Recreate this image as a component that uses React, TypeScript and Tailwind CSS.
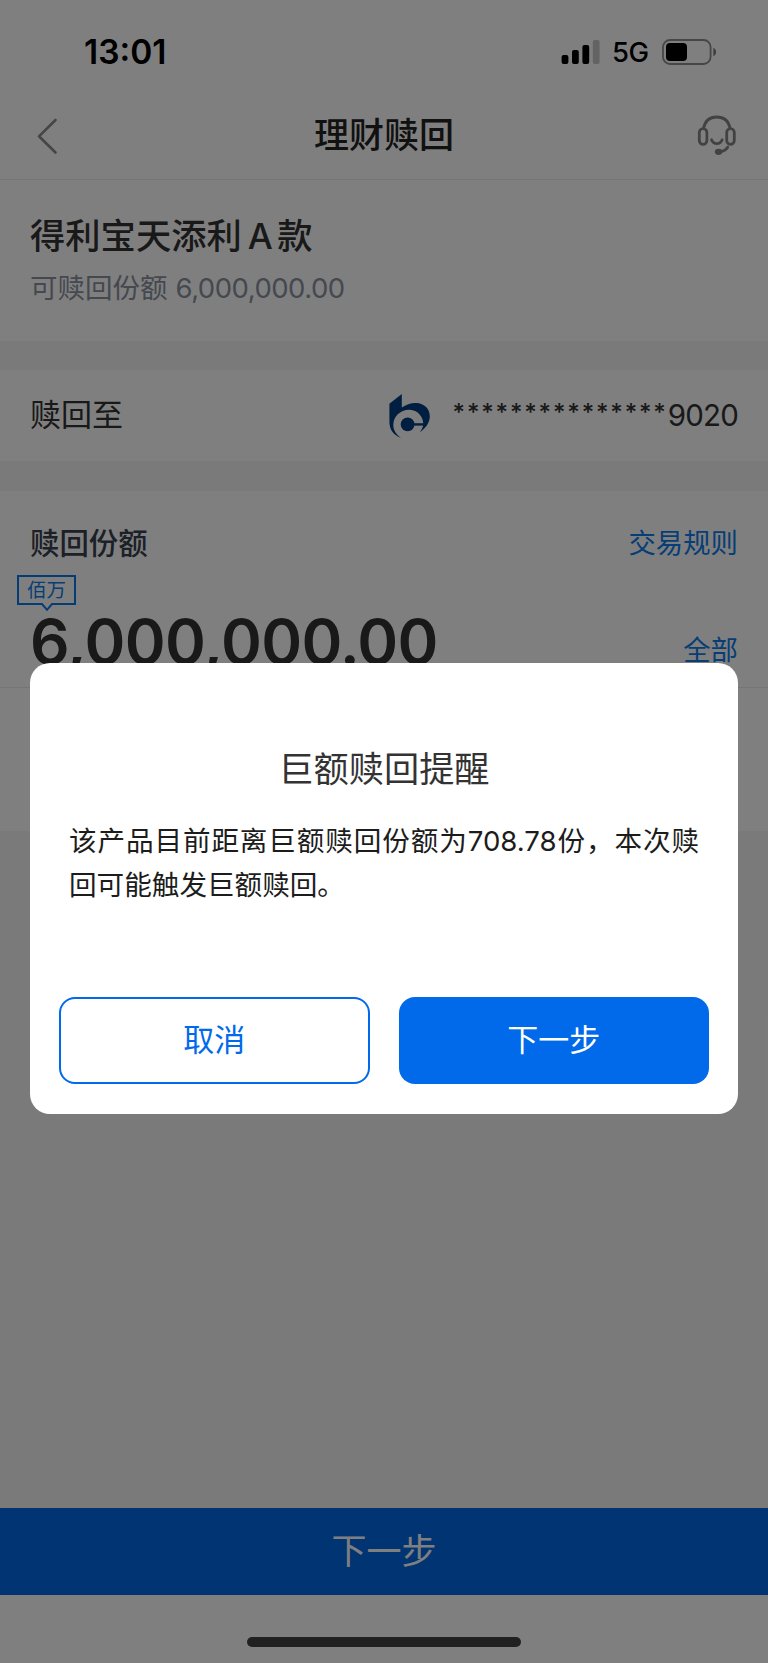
import type { ReactNode } from "react";

function StatusBar() {
  return (
    <div className="flex h-[103px] shrink-0 items-start justify-between pr-[51px] pl-[84px]">
      <span className="mt-[32px] text-[33.5px] leading-[40px] font-semibold text-black">13:01</span>
      <div className="mt-[36px] flex items-center">
        <svg width="39" height="30" viewBox="0 0 39 30" fill="#000">
          <rect x="0.6" y="18" width="6.8" height="9" rx="2" />
          <rect x="11" y="13" width="6.8" height="14" rx="2" />
          <rect x="21.4" y="8" width="6.8" height="19" rx="2" />
          <rect x="31.8" y="3" width="6.8" height="24" rx="2" fillOpacity="0.22" />
        </svg>
        <span className="mt-px ml-[12px] w-[38px] text-[27.5px] leading-[30px] font-medium tracking-[-0.5px] text-black">5G</span>
        <svg className="ml-[12px]" width="55" height="30" viewBox="0 0 55 30">
          <rect x="1" y="3" width="47.6" height="24" rx="7" fill="none" stroke="#000" strokeOpacity="0.45" strokeWidth="1.8" />
          <rect x="4" y="6" width="21" height="18" rx="4" fill="#000" />
          <path d="M51.3 11 C55 12 55 18 51.3 19 Z" fill="#000" fillOpacity="0.5" />
        </svg>
      </div>
    </div>
  );
}

function NavBar() {
  return (
    <header className="flex h-[77px] shrink-0 items-center justify-between border-b border-[#ebebeb] pr-[29px] pb-[12px] pl-[35px]">
      <svg className="mt-[2px]" width="41" height="40" viewBox="0 0 41 40" fill="none" stroke="#8a8a8a" strokeWidth="2.6" strokeLinecap="round" strokeLinejoin="round">
        <path d="M20.5 4 L4 20.3 L20.5 36.5" />
      </svg>
      <h1 className="mr-[4px] text-[35px] leading-[50px] font-medium text-[#222]">理财赎回</h1>
      <svg className="mt-px" width="43" height="43" viewBox="0 0 43 43" fill="none" stroke="#858585" strokeWidth="2.8" strokeLinecap="round">
        <rect x="3.3" y="14.6" width="7.6" height="15.8" rx="3.8" />
        <rect x="30.7" y="14.6" width="7.6" height="15.8" rx="3.8" />
        <path d="M7.5 14.3 C9 7 14 3 20.8 3 C27.6 3 32.6 7 34.1 14.3" />
        <path d="M15.5 25.8 C17.5 31 24.2 31 26.2 25.8" />
        <path d="M31.7 33.2 C30 36 28 37 25 37.6" />
        <ellipse cx="22.6" cy="37.8" rx="2.4" ry="1.7" fill="#858585" />
      </svg>
    </header>
  );
}

function BankLogo() {
  return (
    <svg className="mt-[2px]" width="42" height="46" viewBox="0 0 42 46" fill="#003e81">
      <path d="M0.4 9.8 L12.8 0 V13.5 C17 10.5 22 8.7 27 8.9 C35.5 9.2 41 15 40.8 22.5 C40.6 29 36.5 34.5 30.8 38.2 C34 34.5 35 30 33.5 25.5 C31.5 19.5 26.2 15.8 20.3 15.8 C11 15.8 4.3 22.8 4.3 31 C4.3 36 7 40.5 12 43.7 C4.5 41.5 0.4 35.5 0.4 28 Z" />
      <circle cx="18.6" cy="30.4" r="6.9" />
      <path d="M24 29.2 H34.8 V31.6 H24 Z" />
    </svg>
  );
}

function AmountTag({ children }: { children: ReactNode }) {
  return (
    <div className="relative ml-[17px] flex h-[30px] w-[59px] items-center justify-center border-2 border-[#0878ea] text-[19.5px] leading-[26px] text-[#0f7cea]">
      {children}
      <svg className="absolute top-[25px] left-[19.5px]" width="16" height="11" viewBox="0 0 16 11">
        <path d="M2.5 0 H13.5 V3 L8 8 L2.5 3 Z" fill="#fff" />
        <path d="M1 2 H3 L8 7.8 L13 2 H15" fill="none" stroke="#0878ea" strokeWidth="2" />
      </svg>
    </div>
  );
}

function Dialog() {
  return (
    <div className="absolute inset-0 flex items-start bg-black/50 px-[30px] pt-[663px]">
      <section className="flex h-[451px] w-full flex-col rounded-[20px] bg-white px-[29px] pt-[81px]">
        <h2 className="text-center text-[35.2px] leading-[50px] text-[#333]">巨额赎回提醒</h2>
        <p className="mt-[25px] px-[10px] text-justify text-[27.6px] leading-[44px] text-[#1c1c1c]">
          该产品目前距离巨额赎回份额为708.78份，本次赎回可能触发巨额赎回。
        </p>
        <div className="mt-[90px] grid grid-cols-2 gap-[29px]">
          <button className="h-[87px] rounded-[16px] border-2 border-[#006aeb] text-[31px] text-[#006aeb]">取消</button>
          <button className="h-[87px] rounded-[16px] bg-[#006aeb] text-[31px] text-white">下一步</button>
        </div>
      </section>
    </div>
  );
}

export default function App() {
  return (
    <div className="relative flex h-[1663px] w-[768px] flex-col overflow-hidden bg-white font-['Inter','Noto_Sans_CJK_SC',sans-serif]">
      <StatusBar />
      <NavBar />
      <section className="h-[161px] shrink-0 pt-[32px] pl-[30px]">
        <h2 className="flex text-[35.3px] leading-[50px] font-medium text-[#333]">
          得利宝天添利<span className="mr-[4.5px] ml-[6px]">A</span>款
        </h2>
        <p className="mt-px flex text-[27.5px] leading-[50px] text-[#8a919f]">
          可赎回份额<span className="ml-[8px] tracking-[-0.5px]">6,000,000.00</span>
        </p>
      </section>
      <div className="h-[29px] shrink-0 bg-[#f5f5f5]" />
      <section className="flex h-[91px] shrink-0 items-center justify-between px-[30px] text-[#333]">
        <span className="text-[31px]">赎回至</span>
        <div className="flex items-center">
          <BankLogo />
          <span className="ml-[22px] flex items-center text-[29.5px] tracking-[-0.8px]">
            <span className="mb-[6px] text-[24px] font-medium tracking-[1.85px]">***************</span>
            <span className="mb-px">9020</span>
          </span>
        </div>
      </section>
      <div className="h-[30px] shrink-0 bg-[#f5f5f5]" />
      <section className="flex h-[340px] shrink-0 flex-col">
        <div className="mt-[28px] flex h-[50px] items-center justify-between px-[30px]">
          <h3 className="text-[29.4px] font-medium text-[#38404f]">赎回份额</h3>
          <span className="text-[27.4px] text-[#0f7cea]">交易规则</span>
        </div>
        <div className="mt-[6px]">
          <AmountTag>佰万</AmountTag>
        </div>
        <div className="flex h-[83px] items-start justify-between border-b border-[#ebebeb] pr-[30px] pl-[30px]">
          <span className="-mt-px text-[62px] leading-[76px] font-semibold tracking-[-0.65px] text-[#333]">6,000,000.00</span>
          <span className="mt-[25px] text-[27.4px] leading-[40px] text-[#0f7cea]">全部</span>
        </div>
      </section>
      <div className="flex-1 bg-[#f5f5f5]" />
      <button className="h-[87px] shrink-0 bg-[#0068e6] text-[35px] text-white">下一步</button>
      <div className="flex h-[68px] shrink-0 justify-center pt-[42px]">
        <div className="h-[10px] w-[274px] rounded-full bg-[#424242]" />
      </div>
      <Dialog />
    </div>
  );
}
